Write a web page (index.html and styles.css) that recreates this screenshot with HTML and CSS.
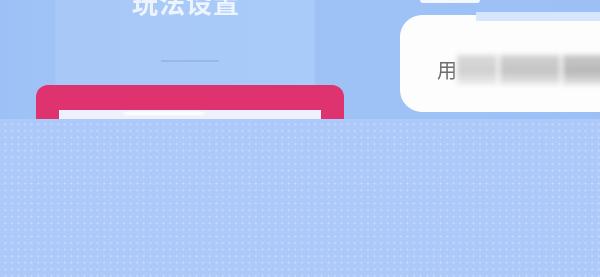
FILE: index.html
```html
<!DOCTYPE html>
<html lang="zh">
<head>
<meta charset="utf-8">
<link rel="stylesheet" href="styles.css">
</head>
<body>
<div class="frame">
  <div class="top">
    <div class="settings">
      <div class="title">玩法设置</div>
      <div class="divider"></div>
      <div class="pink-card">
        <div class="inner-card">
          <span class="inner-blur"></span>
        </div>
      </div>
    </div>
    <div class="right">
      <div class="pill"></div>
      <div class="user-card">
        <span class="user-label">用</span>
        <span class="blur-group">
          <span class="blk b1"></span>
          <span class="blk b2"></span>
          <span class="blk b3"></span>
        </span>
      </div>
    </div>
  </div>
  <div class="bottom"></div>
</div>
</body>
</html>
```
FILE: styles.css
```css
* { box-sizing: border-box; }
html, body { margin: 0; padding: 0; }
body {
  width: 600px;
  height: 277px;
  overflow: hidden;
  font-family: "Noto Sans CJK SC", "Noto Sans", sans-serif;
}
.frame { width: 600px; height: 277px; display: flex; flex-direction: column; }
.top {
  height: 119px;
  flex: none;
  display: flex;
  overflow: hidden;
  background: linear-gradient(90deg, #9dc0f6 0, #a0c3f7 55px, #a8c9f8 56px, #a9cbf9 314px, #9fc2f6 316px, #9cc0f6 100%);
}
.settings {
  width: 308px;
  margin-left: 36px;
  display: flex;
  flex-direction: column;
  align-items: center;
  flex: none;
}
.title {
  margin-top: -16px;
  font-size: 26px;
  font-weight: 700;
  line-height: 36px;
  color: #eef4fe;
  letter-spacing: 1px;
  margin-right: 8px;
  filter: blur(0.4px);
}
.divider {
  margin-top: 40px;
  width: 58px;
  height: 2px;
  background: #93b4e6;
  opacity: 0.8;
  filter: blur(0.4px);
}
.pink-card {
  margin-top: 23px;
  align-self: stretch;
  flex: 1;
  background: #df3370;
  border-radius: 12px 12px 0 0;
  padding: 25px 0 0 23px;
  filter: blur(0.3px);
}
.inner-card {
  height: 100%;
  width: 262px;
  background: #eef1fb;
  display: flex;
  align-items: flex-start;
  padding-left: 65px;
  padding-top: 2px;
}
.inner-blur {
  width: 80px;
  height: 3px;
  background: #ffffff;
  filter: blur(1px);
}
.right {
  margin-left: 56px;
  flex: 1;
  display: flex;
  flex-direction: column;
}
.pill {
  margin-left: 20px;
  width: 60px;
  height: 3px;
  background: #f4f8fe;
  border-radius: 0 0 8px 8px;
}
.user-card {
  position: relative;
  margin-top: 12px;
  height: 97px;
  background: #fdfdfe;
  border-radius: 22px 0 0 22px;
  display: flex;
  align-items: center;
  padding-left: 37px;
  filter: blur(0.3px);
}
.user-card::before {
  content: "";
  position: absolute;
  left: 76px;
  right: 0;
  top: -3px;
  height: 9px;
  background: #d6e6fc;
  filter: blur(0.5px);
}
.user-label {
  font-size: 20px;
  color: #6e6e6e;
  line-height: 1;
  margin-top: 12px;
}
.blur-group {
  display: flex;
  gap: 3px;
  height: 30px;
  margin-top: 12px;
  filter: blur(2.5px);
}
.blk { display: block; height: 30px; background: linear-gradient(180deg, #d2d2d2 0, #c4c4c4 55%, #ebebeb 100%); }
.b1 { width: 40px; background: linear-gradient(180deg, #dadada 0, #d0d0d0 55%, #efefef 100%); }
.b2 { width: 60px; }
.b3 { width: 50px; background: linear-gradient(180deg, #c8c8c8 0, #b8b8b8 55%, #e6e6e6 100%); }
.bottom {
  flex: 1;
  background-color: #adc9fa;
  background-image: radial-gradient(circle at 50% 50%, rgba(230, 240, 255, 0.7) 0, rgba(230, 240, 255, 0.45) 0.7px, transparent 1.2px);
  background-size: 6.6px 6.6px;
  background-position: 2px 2px;
}
```
